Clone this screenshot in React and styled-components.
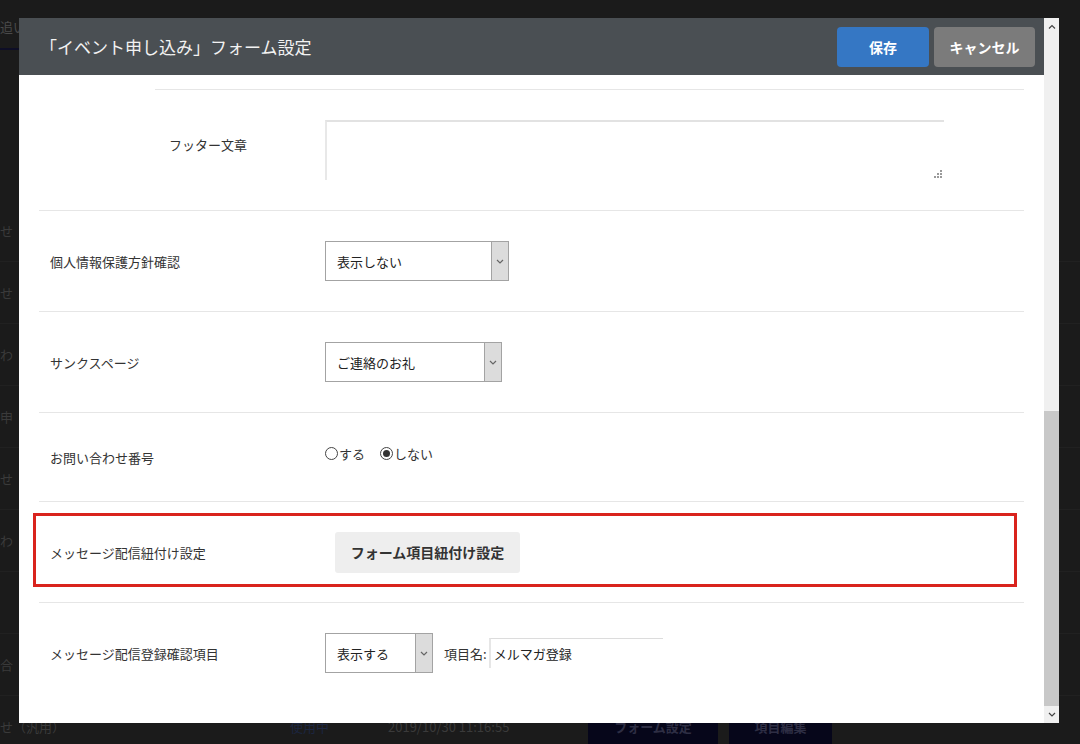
import React from "react";
import styled, { createGlobalStyle } from "styled-components";

const GlobalStyle = createGlobalStyle`
  html, body {
    margin: 0;
    padding: 0;
    background: #1b1b1b;
  }
  body {
    font-family: "Noto Sans CJK JP", "Noto Sans", sans-serif;
  }
`;

// Whole viewport
const Screen = styled.div`
  position: relative;
  width: 1080px;
  height: 744px;
  overflow: hidden;
  background: #1b1b1b;
`;

// Dimmed page behind the modal
const BackPage = styled.div`
  display: flex;
  flex-direction: column;
  color: #3e3e3e;
  font-size: 13px;
`;

const BackTabs = styled.div`
  width: 19px;
  height: 50px;
  box-sizing: border-box;
  padding-top: 17px;
  border-bottom: 2px solid #0e0e26;
  white-space: nowrap;
  color: #4a4a4a;
`;

const BackSpacer = styled.div`
  height: 150px;
`;

const BackRow = styled.div`
  height: 62px;
  display: flex;
  align-items: center;
  border-bottom: 1px solid #212121;
  box-sizing: border-box;
`;

const BackCell = styled.span`
  width: ${(p) => p.w}px;
  flex-shrink: 0;
  white-space: nowrap;
  color: ${(p) => p.color || "#3a3a3a"};
`;

const BackButton = styled.span`
  width: ${(p) => p.w}px;
  height: 36px;
  margin-right: 11px;
  flex-shrink: 0;
  background: #06061a;
  color: #2e2e44;
  display: flex;
  align-items: center;
  justify-content: center;
  font-weight: bold;
`;

// Modal
const Modal = styled.div`
  position: absolute;
  top: 18px;
  left: 19px;
  width: 1040px;
  height: 705px;
  display: flex;
  background: #fff;
`;

const Main = styled.div`
  flex: 1;
  min-width: 0;
  display: flex;
  flex-direction: column;
`;

const Header = styled.div`
  height: 57px;
  flex-shrink: 0;
  background: #4a4f53;
  display: flex;
  align-items: center;
  justify-content: space-between;
  padding: 0 9px 0 21px;
`;

const Title = styled.h1`
  margin: 0;
  font-size: 17px;
  font-weight: normal;
  color: #f2f2f2;
`;

const HeaderButtons = styled.div`
  display: flex;
  gap: 5px;
`;

const HeaderButton = styled.button`
  height: 40px;
  width: ${(p) => p.w}px;
  border: none;
  border-radius: 4px;
  background: ${(p) => (p.primary ? "#3577c4" : "#7b7b7b")};
  color: #fff;
  font-family: inherit;
  font-size: 14px;
  font-weight: bold;
  cursor: pointer;
`;

const Body = styled.div`
  flex: 1;
  overflow: hidden;
  padding: 14px 20px 0 20px;
`;

// Scrollbar drawn on the right side
const ScrollBar = styled.div`
  width: 15px;
  flex-shrink: 0;
  background: #f0f0f0;
  display: flex;
  flex-direction: column;
  align-items: center;
`;

const ScrollArrow = styled.div`
  height: 17px;
  width: 15px;
  display: flex;
  align-items: center;
  justify-content: center;
`;

const ScrollGap = styled.div`
  flex: ${(p) => p.grow};
`;

const ScrollThumb = styled.div`
  width: 15px;
  height: 295px;
  background: #c8c8c8;
`;

// Form rows
const OuterRow = styled.div`
  border-bottom: 1px solid #e6e6e6;
`;

const NestedRow = styled.div`
  margin-left: 116px;
  border-top: 1px solid #e6e6e6;
  display: grid;
  grid-template-columns: 170px 1fr;
  padding: 30px 0 30px;
`;

const Row = styled.div`
  position: relative;
  display: grid;
  grid-template-columns: 286px 1fr;
  align-items: center;
  height: ${(p) => p.h || 100}px;
  border-bottom: ${(p) => (p.last ? "none" : "1px solid #e6e6e6")};
`;

const Label = styled.div`
  font-size: 13px;
  color: #333;
  padding-left: ${(p) => p.pad || 11}px;
  margin-top: ${(p) => p.mt || 0}px;
  align-self: ${(p) => (p.top ? "start" : "center")};
`;

const Control = styled.div`
  display: flex;
  align-items: center;
  padding-left: ${(p) => p.pad || 0}px;
  margin-top: ${(p) => p.mt || 0}px;
`;

const TextArea = styled.div`
  position: relative;
  width: 617px;
  height: 58px;
  border-top: 2px solid #e2e2e2;
  border-left: 2px solid #e8e8e8;
`;

const Grip = styled.svg`
  position: absolute;
  right: 2px;
  bottom: 2px;
`;

const SelectBox = styled.div`
  width: ${(p) => p.w}px;
  height: 40px;
  box-sizing: border-box;
  border: 1px solid #a3a3a3;
  display: flex;
  background: #fff;
`;

const SelectText = styled.div`
  flex: 1;
  display: flex;
  align-items: center;
  padding-left: 11px;
  font-size: 13px;
  color: #222;
`;

const SelectArrow = styled.div`
  width: 16px;
  background: #dcdcdc;
  border-left: 1px solid #a3a3a3;
  display: flex;
  align-items: center;
  justify-content: center;
`;

const RadioLabel = styled.label`
  display: inline-flex;
  align-items: center;
  font-size: 13px;
  color: #333;
  margin-right: 15px;
`;

const RadioDot = styled.span`
  width: 11px;
  height: 11px;
  border: 1px solid #444;
  border-radius: 50%;
  display: inline-flex;
  align-items: center;
  justify-content: center;
  margin-right: 1px;

  &::after {
    content: "";
    width: 7px;
    height: 7px;
    border-radius: 50%;
    background: ${(p) => (p.checked ? "#333" : "transparent")};
  }
`;

const GrayButton = styled.button`
  width: 185px;
  height: 41px;
  border: none;
  border-radius: 3px;
  background: #eeeeee;
  color: #333;
  font-family: inherit;
  font-size: 14px;
  font-weight: bold;
  cursor: pointer;
`;

const Highlight = styled.div`
  position: absolute;
  left: -6px;
  right: 7px;
  top: 11px;
  bottom: 15px;
  border: 3px solid #d9231d;
  pointer-events: none;
`;

const SmallLabel = styled.span`
  font-size: 13px;
  color: #333;
  margin-left: 11px;
  margin-right: 2px;
`;

const NameInput = styled.div`
  width: 169px;
  height: 29px;
  border-top: 1px solid #dcdcdc;
  border-left: 2px solid #e6e6e6;
  display: flex;
  align-items: center;
  padding-left: 3px;
  font-size: 13px;
  color: #222;
`;

const Chevron = ({ up, color = "#555" }) => (
  <svg width="8" height="5" viewBox="0 0 8 5">
    <path
      d={up ? "M1 4.5 L4 1.5 L7 4.5" : "M1 1 L4 4 L7 1"}
      fill="none"
      stroke={color}
      strokeWidth="1.2"
    />
  </svg>
);

function Select({ w, value }) {
  return (
    <SelectBox w={w}>
      <SelectText>{value}</SelectText>
      <SelectArrow>
        <Chevron color="#666" />
      </SelectArrow>
    </SelectBox>
  );
}

const backRows = ["せ", "せ", "わ", "申", "せ", "わ", "", "合"];

export default function App() {
  return (
    <Screen>
      <GlobalStyle />
      <BackPage>
        <BackTabs>追い</BackTabs>
        <BackSpacer />
        {backRows.map((t, i) => (
          <BackRow key={i}>
            <BackCell w={19}>{t}</BackCell>
          </BackRow>
        ))}
        <BackRow>
          <BackCell w={290}>せ（汎用）</BackCell>
          <BackCell w={98} color="#1c2640">使用中</BackCell>
          <BackCell w={200}>2019/10/30 11:16:55</BackCell>
          <BackButton w={130}>フォーム設定</BackButton>
          <BackButton w={103}>項目編集</BackButton>
        </BackRow>
      </BackPage>

      <Modal>
        <Main>
          <Header>
            <Title>「イベント申し込み」フォーム設定</Title>
            <HeaderButtons>
              <HeaderButton primary w={92}>保存</HeaderButton>
              <HeaderButton w={101}>キャンセル</HeaderButton>
            </HeaderButtons>
          </Header>

          <Body>
            <OuterRow>
              <NestedRow>
                <Label pad={14} top mt={15}>フッター文章</Label>
                <TextArea>
                  <Grip width="8" height="8" viewBox="0 0 8 8">
                    <rect x="6" y="0" width="2" height="2" fill="#9a9a9a" />
                    <rect x="3" y="3" width="2" height="2" fill="#9a9a9a" />
                    <rect x="6" y="3" width="2" height="2" fill="#9a9a9a" />
                    <rect x="0" y="6" width="2" height="2" fill="#9a9a9a" />
                    <rect x="3" y="6" width="2" height="2" fill="#9a9a9a" />
                    <rect x="6" y="6" width="2" height="2" fill="#9a9a9a" />
                  </Grip>
                </TextArea>
              </NestedRow>
            </OuterRow>

            <Row>
              <Label>個人情報保護方針確認</Label>
              <Control>
                <Select w={184} value="表示しない" />
              </Control>
            </Row>

            <Row>
              <Label>サンクスページ</Label>
              <Control>
                <Select w={177} value="ご連絡のお礼" />
              </Control>
            </Row>

            <Row h={88}>
              <Label>お問い合わせ番号</Label>
              <Control mt={-8}>
                <RadioLabel>
                  <RadioDot />
                  する
                </RadioLabel>
                <RadioLabel>
                  <RadioDot checked />
                  しない
                </RadioLabel>
              </Control>
            </Row>

            <Row>
              <Label>メッセージ配信紐付け設定</Label>
              <Control pad={10}>
                <GrayButton>フォーム項目紐付け設定</GrayButton>
              </Control>
              <Highlight />
            </Row>

            <Row last>
              <Label>メッセージ配信登録確認項目</Label>
              <Control>
                <Select w={108} value="表示する" />
                <SmallLabel>項目名:</SmallLabel>
                <NameInput>メルマガ登録</NameInput>
              </Control>
            </Row>
          </Body>
        </Main>

        <ScrollBar>
          <ScrollArrow>
            <Chevron up color="#444" />
          </ScrollArrow>
          <ScrollGap grow={1} />
          <ScrollThumb />
          <ScrollArrow>
            <Chevron color="#444" />
          </ScrollArrow>
        </ScrollBar>
      </Modal>
    </Screen>
  );
}
